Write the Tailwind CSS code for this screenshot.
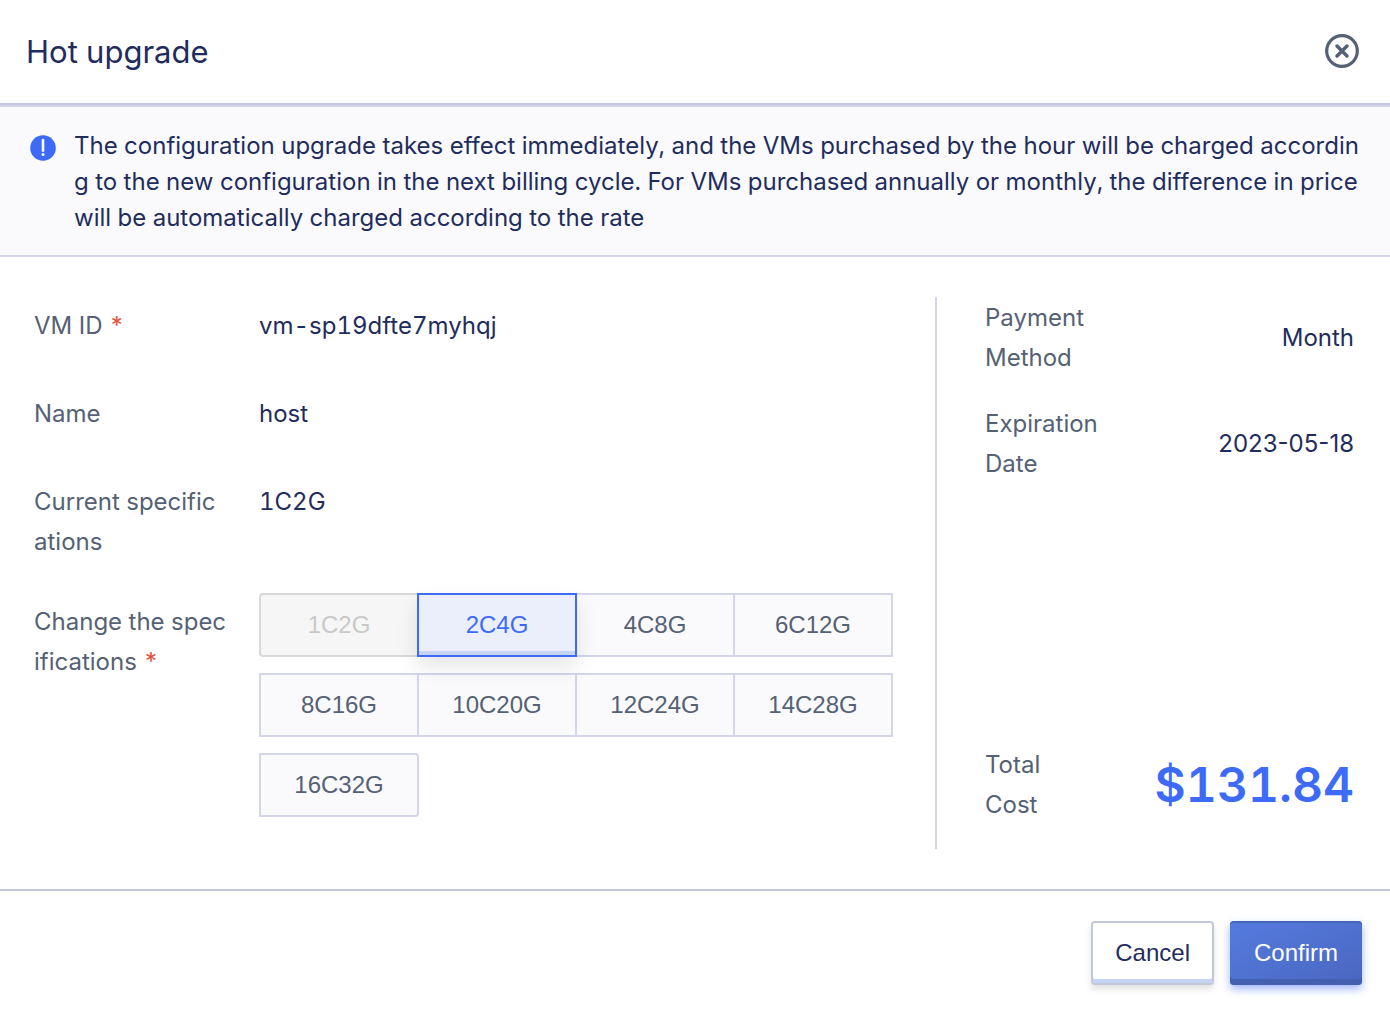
<!DOCTYPE html>
<html lang="en">
<head>
<meta charset="utf-8">
<meta name="viewport" content="width=device-width, initial-scale=1">
<title>Hot upgrade</title>
<script src="https://cdn.jsdelivr.net/npm/@tailwindcss/browser@4"></script>
</head>
<body class="bg-white font-['Inter',sans-serif] text-2xl tabular-nums text-[#1f2d5e]">
<form class="flex min-h-screen flex-col">
  <header class="flex items-center justify-between border-b-2 border-[#c3c8d9] pt-7 pr-7 pb-[27px] pl-[26px]">
    <h1 class="text-[31px] leading-12">Hot upgrade</h1>
    <button type="button" aria-label="Close" class="size-10">
      <svg viewBox="0 0 40 40" class="size-10 fill-none stroke-[#556175]">
        <circle cx="20" cy="19" r="15.3" stroke-width="3.2"/>
        <path d="M15 14l10 10M25 14l-10 10" stroke-width="3.5" stroke-linecap="round"/>
      </svg>
    </button>
  </header>

  <div role="alert" class="flex gap-[18px] border-y-2 border-[#d3d5ea] bg-[#fafafc] pt-[21px] pr-5 pb-[19px] pl-[30px]">
    <svg viewBox="0 0 26 26" class="mt-[7px] size-[26px] shrink-0">
      <circle cx="13" cy="13" r="12.8" class="fill-[#3d6bf8]"/>
      <path d="M13 5v10.6" class="stroke-white" stroke-width="2.6" stroke-linecap="round"/>
      <circle cx="13" cy="19.4" r="1.5" class="fill-white"/>
    </svg>
    <p class="flex-1 leading-9 break-all">The configuration upgrade takes effect immediately, and the VMs purchased by the hour will be charged according to the new configuration in the next billing cycle. For VMs purchased annually or monthly, the difference in price will be automatically charged according to the rate</p>
  </div>

  <main class="flex flex-1 py-10">
    <div class="flex flex-1 flex-col gap-[31px] pl-[34px] leading-10">
      <div class="flex min-h-[57px] gap-6 pt-[9px]">
        <div class="w-[201px] shrink-0 text-[#556175]">VM ID <span class="text-[#e5533d]">*</span></div>
        <div>vm-sp19dfte7myhqj</div>
      </div>
      <div class="flex min-h-[57px] gap-6 pt-[9px]">
        <div class="w-[201px] shrink-0 text-[#556175]">Name</div>
        <div>host</div>
      </div>
      <div class="flex min-h-[57px] gap-6 pt-[9px]">
        <div class="w-[201px] shrink-0 text-[#556175]">Current specific<br>ations</div>
        <div>1C2G</div>
      </div>
      <div class="flex gap-6">
        <div id="spec-label" class="w-[201px] shrink-0 pt-[9px] text-[#556175]">Change the spec<br>ifications <span class="text-[#e5533d]">*</span></div>
        <div role="radiogroup" aria-labelledby="spec-label" class="flex flex-1 flex-wrap content-start gap-y-4 pr-10 font-['Liberation_Sans',Arial,sans-serif] text-[#556175]">
          <label class="relative -mr-0.5 flex h-16 w-40 items-center justify-center rounded-l border-2 border-[#d9d9d9] bg-[#f6f6f6] text-[#c9c9c9]"><input type="radio" name="spec" disabled class="sr-only">1C2G</label>
          <label class="relative z-10 -mr-0.5 flex h-16 w-40 items-center justify-center border-2 border-[#3d6bf8] bg-[#ebeffc] text-[#3d6bf8] shadow-[inset_0_-4px_0_#c5d3f5,0_10px_20px_rgba(0,0,0,0.1)]"><input type="radio" name="spec" checked class="sr-only">2C4G</label>
          <label class="relative -mr-0.5 flex h-16 w-40 items-center justify-center border-2 border-[#d3d5ea] bg-[#fafafd]"><input type="radio" name="spec" class="sr-only">4C8G</label>
          <label class="relative -mr-0.5 flex h-16 w-40 items-center justify-center border-2 border-[#d3d5ea] bg-[#fafafd]"><input type="radio" name="spec" class="sr-only">6C12G</label>
          <label class="relative -mr-0.5 flex h-16 w-40 items-center justify-center border-2 border-[#d3d5ea] bg-[#fafafd]"><input type="radio" name="spec" class="sr-only">8C16G</label>
          <label class="relative -mr-0.5 flex h-16 w-40 items-center justify-center border-2 border-[#d3d5ea] bg-[#fafafd]"><input type="radio" name="spec" class="sr-only">10C20G</label>
          <label class="relative -mr-0.5 flex h-16 w-40 items-center justify-center border-2 border-[#d3d5ea] bg-[#fafafd]"><input type="radio" name="spec" class="sr-only">12C24G</label>
          <label class="relative -mr-0.5 flex h-16 w-40 items-center justify-center border-2 border-[#d3d5ea] bg-[#fafafd]"><input type="radio" name="spec" class="sr-only">14C28G</label>
          <label class="relative -mr-0.5 flex h-16 w-40 items-center justify-center rounded-r border-2 border-[#d3d5ea] bg-[#fafafd]"><input type="radio" name="spec" class="sr-only">16C32G</label>
        </div>
      </div>
    </div>

    <aside class="flex w-[455px] flex-col border-l-2 border-[#d3d5ea] pt-px pr-9 pb-6 pl-12 leading-10">
      <div class="flex items-center justify-between">
        <div class="w-[140px] text-[#556175]">Payment Method</div>
        <div>Month</div>
      </div>
      <div class="mt-[26px] flex items-center justify-between">
        <div class="w-[140px] text-[#556175]">Expiration Date</div>
        <div class="proportional-nums">2023-05-18</div>
      </div>
      <div class="mt-auto flex items-center justify-between">
        <div class="w-[80px] text-[#556175]">Total Cost</div>
        <div class="text-5xl font-semibold text-[#3d6bf8]">$131.84</div>
      </div>
    </aside>
  </main>

  <footer class="flex justify-end gap-4 border-t-2 border-[#c3c8d9] pt-[30px] pr-7 pb-[27px] font-['Liberation_Sans',Arial,sans-serif]">
    <button type="button" class="h-16 rounded border-2 border-[#c3c8d9] bg-white px-[22px] shadow-[inset_0_-4px_0_#c5d3f5,0_4px_6px_rgba(0,0,0,0.12)]">Cancel</button>
    <button type="submit" class="h-16 rounded bg-linear-to-br from-[#557be0] to-[#4967bf] px-6 text-white shadow-[inset_0_-6px_0_#435faf,inset_0_2px_0_#4765b9,0_4px_8px_rgba(61,107,248,0.5)]">Confirm</button>
  </footer>
</form>
</body>
</html>
